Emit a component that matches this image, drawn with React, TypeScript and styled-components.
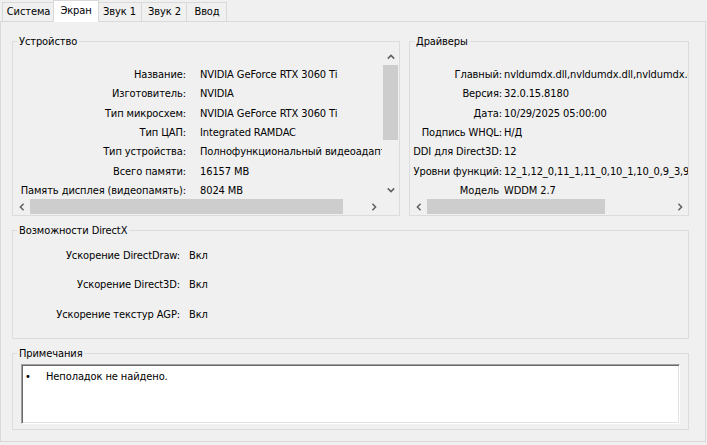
import React from "react";
import styled, { createGlobalStyle } from "styled-components";

const Global = createGlobalStyle`
  html, body { margin: 0; padding: 0; background: #f0f0f0; }
  body {
    font-family: "DejaVu Sans Condensed", "DejaVu Sans", sans-serif;
    font-stretch: condensed;
    font-size: 11px;
    letter-spacing: -0.1px;
    color: #000;
  }
`;

const Window = styled.div`
  width: 707px;
  height: 445px;
  background: #f0f0f0;
  overflow: hidden;
`;

const TabStrip = styled.div`
  display: flex;
  align-items: flex-end;
  height: 21px;
  padding-left: 2px;
`;

const Tab = styled.div<{ $active?: boolean; $w: number }>`
  box-sizing: border-box;
  position: relative;
  z-index: ${(p) => (p.$active ? 2 : 1)};
  width: ${(p) => p.$w}px;
  height: ${(p) => (p.$active ? 22 : 19)}px;
  margin: ${(p) => (p.$active ? "0 -2px -1px -2px" : "0")};
  padding-top: ${(p) => (p.$active ? 3 : 2)}px;
  background: ${(p) => (p.$active ? "#ffffff" : "#f0f0f0")};
  border: 1px solid #d9d9d9;
  border-bottom: none;
  border-left-color: ${(p) => (p.$active ? "#d9d9d9" : "transparent")};
  text-align: center;
  line-height: 13px;
  white-space: nowrap;
  &:first-child {
    border-left-color: #d9d9d9;
  }
`;

const Panel = styled.div`
  box-sizing: border-box;
  width: 706px;
  height: 421px;
  border: 1px solid #d9d9d9;
  padding: 13px 0 0 11px;
  display: flex;
  flex-direction: column;
  gap: 8px;
`;

const TopRow = styled.div`
  display: grid;
  grid-template-columns: 388px 280px;
  column-gap: 9px;
`;

const Group = styled.fieldset<{ $h: number; $w?: number }>`
  box-sizing: border-box;
  margin: 0;
  padding: 0;
  min-width: 0;
  width: ${(p) => (p.$w ? `${p.$w}px` : "auto")};
  height: ${(p) => p.$h}px;
  border: 1px solid #dcdcdc;
`;

const Legend = styled.legend`
  margin-left: 4px;
  padding: 0 2px;
  line-height: 13px;
  font-size: 11px;
`;

const ScrollFrame = styled.div<{ $vscroll?: boolean }>`
  display: grid;
  grid-template-columns: ${(p) => (p.$vscroll ? "1fr 17px" : "1fr")};
  grid-template-rows: 150px 17px;
`;

const PropList = styled.div`
  overflow: hidden;
  padding-top: 17px;
  box-sizing: border-box;
  height: 150px;
`;

const PropRow = styled.div<{ $labelW: number; $gap: number; $h: number }>`
  display: grid;
  grid-template-columns: ${(p) => p.$labelW}px max-content;
  column-gap: ${(p) => p.$gap}px;
  height: ${(p) => p.$h}px;
  align-items: center;
  white-space: nowrap;
  line-height: 13px;
`;

const Label = styled.span`
  white-space: nowrap;
  display: flex;
  justify-content: flex-end;
`;

const Value = styled.span`
  white-space: nowrap;
`;

const VScroll = styled.div`
  display: grid;
  grid-template-rows: 17px 1fr 17px;
  background: #f0f0f0;
`;

const HScroll = styled.div`
  display: flex;
  background: #f0f0f0;
  height: 17px;
`;

const ArrowBtn = styled.div`
  flex: none;
  width: 17px;
  height: 17px;
  display: flex;
  align-items: center;
  justify-content: center;
`;

const VThumb = styled.div<{ $size: number }>`
  height: ${(p) => p.$size}px;
  margin: 0 1px;
  background: #cdcdcd;
`;

const HThumb = styled.div<{ $size: number }>`
  flex: none;
  width: ${(p) => p.$size}px;
  margin: 1px 0;
  background: #cdcdcd;
`;

const Spacer = styled.div`
  flex: 1;
`;

const CapList = styled.div`
  padding-top: 3.25px;
`;

const NotesBox = styled.div`
  box-sizing: border-box;
  margin: 4px 8px 0;
  height: 60px;
  background: #ffffff;
  border-top: 1px solid #a0a0a0;
  border-left: 1px solid #a0a0a0;
  border-right: 1px solid #ffffff;
  border-bottom: 1px solid #ffffff;
  box-shadow: inset 1px 1px 0 #696969, inset -1px -1px 0 #e3e3e3;
  padding: 5px 0 0 3px;
`;

const NoteItem = styled.div`
  display: grid;
  grid-template-columns: 21px 1fr;
  line-height: 13px;
`;

type Dir = "up" | "down" | "left" | "right";

const Chevron: React.FC<{ dir: Dir }> = ({ dir }) => {
  const pts: Record<Dir, string> = {
    up: "0.8,4.6 4,1.4 7.2,4.6",
    down: "0.8,1.4 4,4.6 7.2,1.4",
    left: "4.6,0.8 1.4,4 4.6,7.2",
    right: "1.4,0.8 4.6,4 1.4,7.2",
  };
  const vertical = dir === "up" || dir === "down";
  return (
    <svg
      width={vertical ? 8 : 6}
      height={vertical ? 6 : 8}
      viewBox={vertical ? "0 0 8 6" : "0 0 6 8"}
    >
      <polyline points={pts[dir]} fill="none" stroke="#606060" strokeWidth="1.5" />
    </svg>
  );
};

const device: [string, string][] = [
  ["Название:", "NVIDIA GeForce RTX 3060 Ti"],
  ["Изготовитель:", "NVIDIA"],
  ["Тип микросхем:", "NVIDIA GeForce RTX 3060 Ti"],
  ["Тип ЦАП:", "Integrated RAMDAC"],
  ["Тип устройства:", "Полнофункциональный видеоадаптер"],
  ["Всего памяти:", "16157 MB"],
  ["Память дисплея (видеопамять):", "8024 MB"],
  ["Общая память:", "8133 MB"],
];

const drivers: [string, string][] = [
  ["Главный:", "nvldumdx.dll,nvldumdx.dll,nvldumdx.dll,nvldumdx.dll"],
  ["Версия:", "32.0.15.8180"],
  ["Дата:", "10/29/2025 05:00:00"],
  ["Подпись WHQL:", "Н/Д"],
  ["DDI для Direct3D:", "12"],
  ["Уровни функций:", "12_1,12_0,11_1,11_0,10_1,10_0,9_3,9_2,9_1"],
  ["Модель\u00a0", "WDDM 2.7"],
];

const caps: [string, string][] = [
  ["Ускорение DirectDraw:", "Вкл"],
  ["Ускорение Direct3D:", "Вкл"],
  ["Ускорение текстур AGP:", "Вкл"],
];

export default function App() {
  return (
    <Window>
      <Global />
      <TabStrip>
        <Tab $w={53}>Система</Tab>
        <Tab $w={46} $active>
          Экран
        </Tab>
        <Tab $w={45}>Звук 1</Tab>
        <Tab $w={45}>Звук 2</Tab>
        <Tab $w={40}>Ввод</Tab>
      </TabStrip>
      <Panel>
        <TopRow>
          <Group $h={181}>
            <Legend>Устройство</Legend>
            <ScrollFrame $vscroll>
              <PropList>
                {device.map(([l, v]) => (
                  <PropRow key={l} $labelW={173} $gap={14} $h={19.33}>
                    <Label>{l}</Label>
                    <Value>{v}</Value>
                  </PropRow>
                ))}
              </PropList>
              <VScroll>
                <ArrowBtn>
                  <Chevron dir="up" />
                </ArrowBtn>
                <div>
                  <VThumb $size={75} />
                </div>
                <ArrowBtn>
                  <Chevron dir="down" />
                </ArrowBtn>
              </VScroll>
              <HScroll>
                <ArrowBtn>
                  <Chevron dir="left" />
                </ArrowBtn>
                <HThumb $size={313} />
                <Spacer />
                <ArrowBtn>
                  <Chevron dir="right" />
                </ArrowBtn>
              </HScroll>
              <div />
            </ScrollFrame>
          </Group>
          <Group $h={181}>
            <Legend>Драйверы</Legend>
            <ScrollFrame>
              <PropList>
                {drivers.map(([l, v]) => (
                  <PropRow key={l} $labelW={92} $gap={2} $h={19.33}>
                    <Label>{l}</Label>
                    <Value>{v}</Value>
                  </PropRow>
                ))}
              </PropList>
              <HScroll>
                <ArrowBtn>
                  <Chevron dir="left" />
                </ArrowBtn>
                <HThumb $size={178} />
                <Spacer />
                <ArrowBtn>
                  <Chevron dir="right" />
                </ArrowBtn>
              </HScroll>
            </ScrollFrame>
          </Group>
        </TopRow>
        <Group $h={115} $w={677}>
          <Legend>Возможности DirectX</Legend>
          <CapList>
            {caps.map(([l, v]) => (
              <PropRow key={l} $labelW={167} $gap={9} $h={29.5}>
                <Label>{l}</Label>
                <Value>{v}</Value>
              </PropRow>
            ))}
          </CapList>
        </Group>
        <Group $h={83} $w={677}>
          <Legend>Примечания</Legend>
          <NotesBox>
            <NoteItem>
              <span>•</span>
              <span>Неполадок не найдено.</span>
            </NoteItem>
          </NotesBox>
        </Group>
      </Panel>
    </Window>
  );
}
